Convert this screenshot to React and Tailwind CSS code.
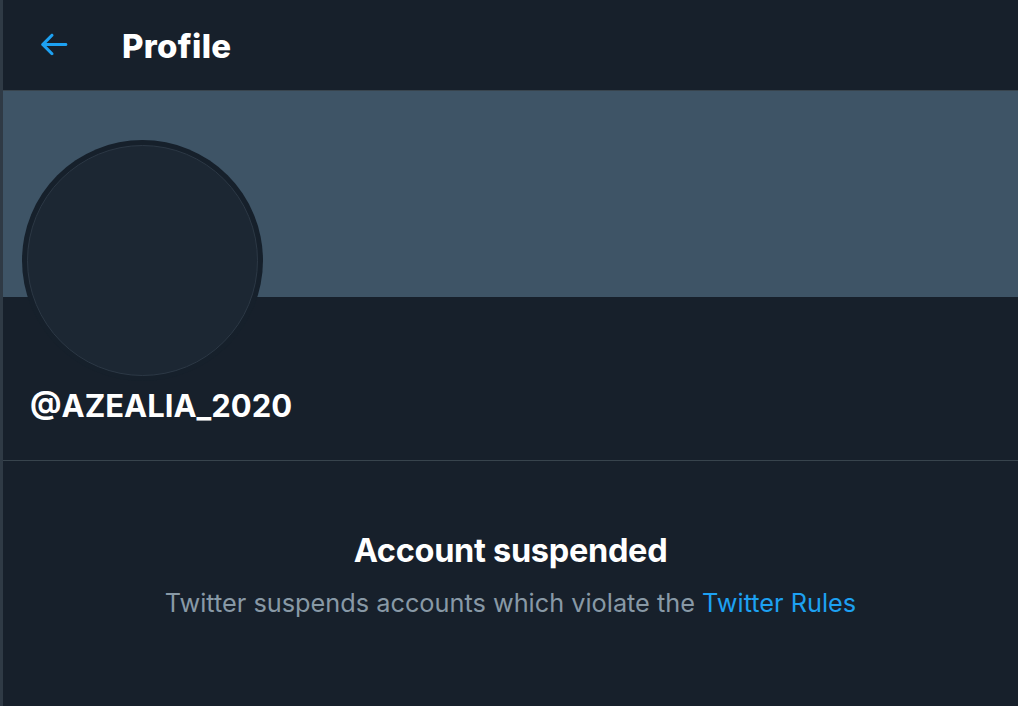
export default function App() {
  const font = { fontFamily: 'Inter, "Liberation Sans", sans-serif' };
  return (
    <div style={font} className="w-[1018px] h-[706px] bg-[#17202b] border-l-[3px] border-[#2f3a45] flex flex-col overflow-hidden">
      <div className="h-[91px] shrink-0 border-b border-[#38444d] flex items-center">
        <div className="w-[37px] h-[37px] ml-[32px] mt-[-2px]">
          <svg viewBox="0 0 24 24" className="w-[37px] h-[37px]" fill="#1da1f2">
            <path d="M20 11H7.414l4.293-4.293c.39-.39.39-1.023 0-1.414s-1.023-.39-1.414 0l-6 6c-.39.39-.39 1.023 0 1.414l6 6c.195.195.45.293.707.293s.512-.098.707-.293c.39-.39.39-1.023 0-1.414L7.414 13H20c.553 0 1-.447 1-1s-.447-1-1-1z" />
          </svg>
        </div>
        <h1 className="ml-[50px] text-[33px] font-extrabold text-white tracking-[0.3px] leading-none mt-[3px]">Profile</h1>
      </div>
      <div className="h-[206px] shrink-0 bg-[#3e5466]"></div>
      <div className="shrink-0 border-b border-[#38444d] pb-[36px]">
        <div className="ml-[19px] mt-[-157px] w-[241px] h-[241px] rounded-full bg-[#16202b] p-[5px]">
          <div className="w-full h-full rounded-full bg-[#1c2733] border border-[#2c3845]"></div>
        </div>
        <div className="ml-[27px] mt-[7px] text-[31px] font-bold text-white leading-[36px]">@AZEALIA_2020</div>
      </div>
      <div className="flex flex-col items-center pt-[72px]">
        <div className="text-[32.5px] font-bold text-white leading-[36px] tracking-[-0.3px]">Account suspended</div>
        <div className="mt-[19px] text-[25.3px] text-[#8899a6] leading-[30px]">
          Twitter suspends accounts which violate the <span className="text-[#1da1f2]">Twitter Rules</span>
        </div>
      </div>
    </div>
  );
}
